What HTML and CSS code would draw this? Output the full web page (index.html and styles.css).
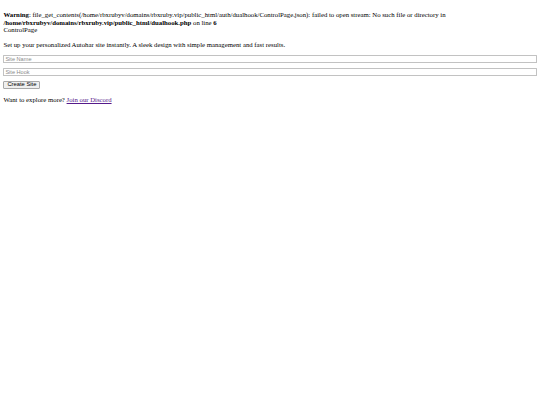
FILE: index.html
```html
<!DOCTYPE html>
<html>
<head>
<meta charset="utf-8">
<title>ControlPage</title>
<link rel="stylesheet" href="styles.css">
</head>
<body>
<br>
<b>Warning</b>: file_get_contents(/home/rbxrubyv/domains/rbxruby.vip/public_html/auth/dualhook/ControlPage.json): failed to open stream: No such file or directory in <b>/home/rbxrubyv/domains/rbxruby.vip/public_html/dualhook.php</b> on line <b>6</b><br>
ControlPage
<p class="intro">Set up your personalized Autohar site instantly. A sleek design with simple management and fast results.</p>
<form class="site-form">
<input class="field" type="text" placeholder="Site Name">
<input class="field" type="text" placeholder="Site Hook">
<button class="create" type="button">Create Site</button>
</form>
<p class="explore">Want to explore more? <a class="discord" href="#">Join our Discord</a></p>
</body>
</html>
```
FILE: styles.css
```css
html {
  background: #ffffff;
}
body {
  margin: 3.375px;
  font-family: "Liberation Serif", "Times New Roman", serif;
  font-size: 6.75px;
  line-height: 7.6px;
  color: #000000;
}
.intro,
.explore {
  margin: 6.75px 0;
}
.site-form {
  margin: 0;
}
.field {
  display: block;
  width: 100%;
  height: 8px;
  box-sizing: border-box;
  margin: 0 0 5px 0;
  padding: 0 1px;
  border: 1px solid #c2c2c2;
  border-radius: 0.5px;
  font-family: "Liberation Sans", Arial, sans-serif;
  font-size: 5.6px;
  color: #000000;
  background: #ffffff;
  outline: none;
}
.field::placeholder {
  color: #8a8a8a;
}
.create {
  display: inline-block;
  height: 8px;
  box-sizing: border-box;
  padding: 0 3px;
  border: 1px solid #a8a8a8;
  border-radius: 1px;
  background: #efefef;
  font-family: "Liberation Sans", Arial, sans-serif;
  font-size: 5.8px;
  line-height: 5.8px;
  color: #000000;
  vertical-align: top;
}
.discord {
  color: #551a8b;
}
```
